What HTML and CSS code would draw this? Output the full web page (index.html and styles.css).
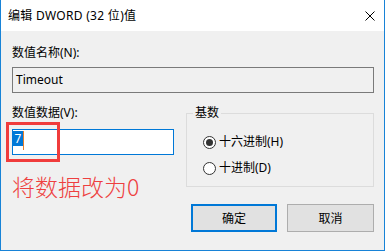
FILE: index.html
```html
<!DOCTYPE html>
<html lang="zh-CN">
<head>
    <meta charset="UTF-8">
    <title>编辑 DWORD (32 位)值</title>
    <link rel="stylesheet" href="styles.css">
</head>
<body>
    <div class="window">
        <div class="titlebar">
            <span class="title">编辑 DWORD (32 位)值</span>
            <svg class="close" width="10" height="10" viewBox="0 0 10 10">
                <path d="M0.5 0.5 L9.5 9.5 M9.5 0.5 L0.5 9.5" stroke="#000" stroke-width="1" fill="none"/>
            </svg>
        </div>
        <div class="content">
            <div class="label">数值名称(N):</div>
            <div class="namebox">Timeout</div>

            <div class="lower">
                <div class="left">
                    <div class="label">数值数据(V):</div>
                    <div class="databox">
                        <span class="sel">7</span><span class="caret"></span>
                        <div class="mark"></div>
                    </div>
                    <div class="note">将数据改为0</div>
                </div>
                <fieldset class="base">
                    <legend>基数</legend>
                    <div class="radio"><span class="dot checked"></span>十六进制(H)</div>
                    <div class="radio"><span class="dot"></span>十进制(D)</div>
                </fieldset>
            </div>

            <div class="buttons">
                <div class="btn default">确定</div>
                <div class="btn">取消</div>
            </div>
        </div>
    </div>
</body>
</html>
```

FILE: styles.css
```css
body {
    margin: 0;
    font-family: "Noto Sans", "Noto Sans CJK SC", sans-serif;
    font-size: 12px;
    color: #000;
}
.window {
    width: 385px;
    height: 251px;
    box-sizing: border-box;
    background: #f0f0f0;
    border: 1px solid #1883d7;
    border-top: none;
}
.titlebar {
    height: 31px;
    background: #fff;
    display: flex;
    align-items: center;
    justify-content: space-between;
    padding: 0 9px 0 7px;
}
.title {
    font-size: 12px;
    line-height: 16px;
    letter-spacing: 0.3px;
}
.close {
    display: block;
}
.content {
    padding: 14px 10px 0 11px;
}
.label {
    line-height: 16px;
    height: 16px;
}
.namebox {
    margin-top: 6px;
    height: 26px;
    box-sizing: border-box;
    border: 1px solid #7a7a7a;
    background: #f0f0f0;
    padding-left: 3px;
    line-height: 24px;
}
.lower {
    display: grid;
    grid-template-columns: 162px 1fr;
    column-gap: 12px;
    margin-top: 12px;
}
.databox {
    position: relative;
    margin-top: 8px;
    height: 26px;
    box-sizing: border-box;
    border: 1px solid #0078d7;
    background: #fff;
    padding: 1px 0 0 0;
    display: flex;
    align-items: flex-start;
}
.sel {
    background: #0078d7;
    color: #fff;
    line-height: 15px;
    height: 15px;
    width: 10px;
    text-align: center;
}
.caret {
    width: 1px;
    height: 19px;
    background: #e8802a;
}
.mark {
    position: absolute;
    left: -7px;
    top: -8px;
    width: 54px;
    height: 40px;
    box-sizing: border-box;
    border: 3px solid #f03c3c;
}
.note {
    margin-top: 20px;
    font-size: 23px;
    line-height: 23px;
    color: #ee3f3f;
    font-family: "Noto Sans CJK SC", sans-serif;
    font-weight: 300;
}
.base {
    margin: 0;
    height: 82px;
    box-sizing: border-box;
    border: 1px solid #dcdcdc;
    padding: 13px 0 0 16px;
    min-width: 0;
}
.base legend {
    padding: 0 2px;
    margin-left: -10px;
    line-height: 16px;
}
.radio {
    display: flex;
    align-items: center;
    gap: 3px;
    line-height: 16px;
    height: 16px;
    margin-bottom: 10px;
}
.dot {
    width: 13px;
    height: 13px;
    box-sizing: border-box;
    border: 1px solid #333;
    border-radius: 50%;
    background: #fff;
    display: flex;
    align-items: center;
    justify-content: center;
}
.dot.checked::after {
    content: "";
    width: 7px;
    height: 7px;
    border-radius: 50%;
    background: #333;
}
.buttons {
    display: flex;
    justify-content: flex-end;
    gap: 10px;
    margin-top: 6px;
}
.btn {
    width: 87px;
    height: 28px;
    box-sizing: border-box;
    border: 1px solid #adadad;
    background: #e1e1e1;
    display: flex;
    align-items: center;
    justify-content: center;
}
.btn.default {
    width: 86px;
    border: 2px solid #0078d7;
}
```
